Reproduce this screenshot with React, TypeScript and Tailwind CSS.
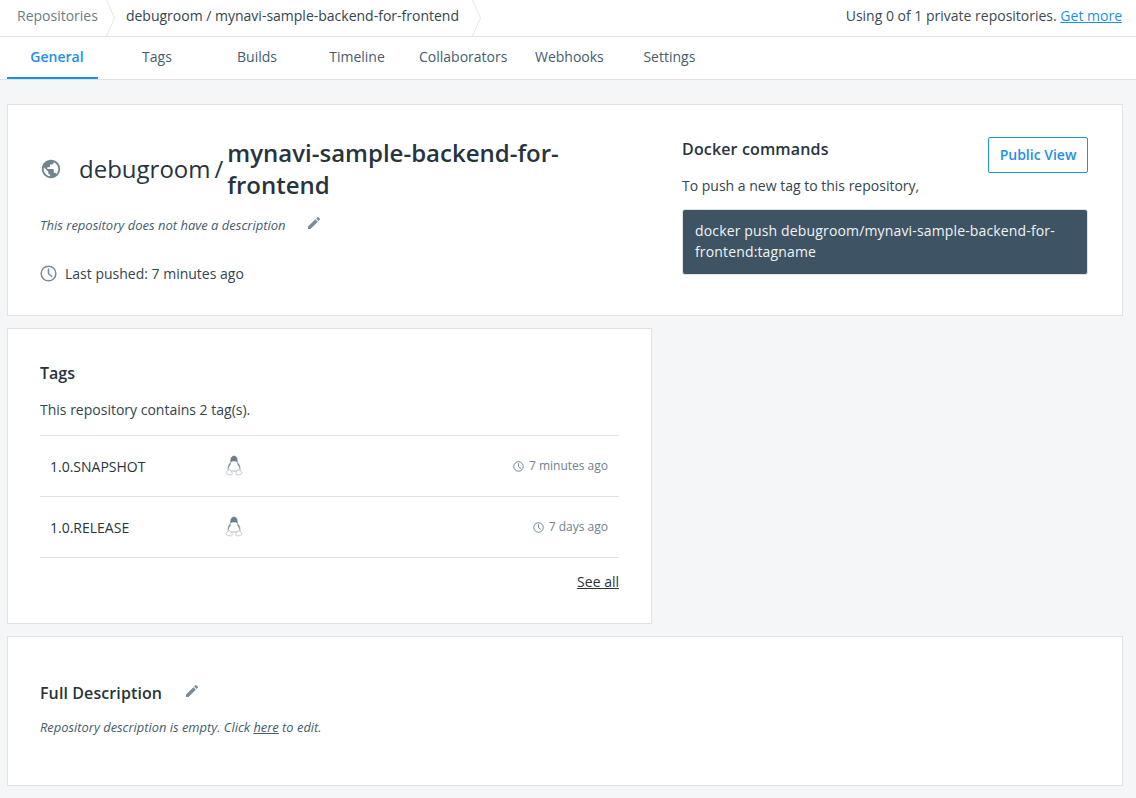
import React from 'react';

const tabs = ['General', 'Tags', 'Builds', 'Timeline', 'Collaborators', 'Webhooks', 'Settings'];

const Chevron = () => (
  <svg width="10" height="36" viewBox="0 0 10 36" fill="none" className="shrink-0 self-start">
    <path d="M0.5 0L8.5 18L0.5 36" stroke="#e4e7ea" strokeWidth="1" />
  </svg>
);

const Clock = ({ size, color }: { size: number; color: string }) => (
  <svg width={size} height={size} viewBox="0 0 16 16" fill="none" stroke={color} strokeWidth="1.4" className="shrink-0">
    <circle cx="8" cy="8" r="6.9" />
    <path d="M8 3.8V8.2L11 10.6" strokeLinecap="round" />
  </svg>
);

const Pencil = () => (
  <svg width="16" height="16" viewBox="0 0 24 24" fill="#7a8c9a" className="-mt-[4px] shrink-0">
    <path d="M3 17.25V21h3.75L17.81 9.94l-3.75-3.75L3 17.25zM20.71 7.04a1 1 0 0 0 0-1.41l-2.34-2.34a1 1 0 0 0-1.41 0l-1.83 1.83 3.75 3.75 1.83-1.83z" />
  </svg>
);

const Globe = () => (
  <svg width="22" height="22" viewBox="0 0 24 24" fill="#70858f" className="shrink-0">
    <path d="M12 2C6.48 2 2 6.48 2 12s4.48 10 10 10 10-4.48 10-10S17.52 2 12 2zm-1 17.93c-3.95-.49-7-3.85-7-7.93 0-.62.08-1.21.21-1.79L9 15v1c0 1.1.9 2 2 2v1.93zm6.9-2.54c-.26-.81-1-1.39-1.9-1.39h-1v-3c0-.55-.45-1-1-1H8v-2h2c.55 0 1-.45 1-1V7h2c1.1 0 2-.9 2-2v-.41c2.93 1.19 5 4.06 5 7.41 0 2.08-.8 3.97-2.1 5.39z" />
  </svg>
);

const Tux = () => (
  <svg width="20" height="22" viewBox="0 0 20 22" className="shrink-0">
    {/* body outline */}
    <path d="M10 1C7.700 1 6.800 2.800 6.800 5c0 2-.9 3.200-1.800 4.600C4 11.200 3.700 13.500 4.200 16h11.600C16.300 13.500 16 11.200 15 9.600 14.100 8.200 13.200 7 13.200 5 13.200 2.800 12.300 1 10 1z" fill="#fff" stroke="#a3b0b9" strokeWidth="0.9" />
    {/* head */}
    <path d="M10 1C7.700 1 6.800 2.800 6.800 5c0 1-.2 1.700-.5 2.500 1-.9 2.400-1.300 3.700-1.300s2.700.4 3.700 1.300c-.3-.8-.5-1.500-.5-2.500C13.200 2.800 12.300 1 10 1z" fill="#6b7e8b" />
    {/* shoulders */}
    <path d="M6.300 7.500C5.800 8.400 5.400 9 5 9.600 4.200 10.900 3.900 12.700 4 14.500c.6-1.800 1.400-3.600 2.600-5.100.3-.7.100-1.300-.3-1.900zM13.700 7.500c.5.900.9 1.500 1.300 2.100.8 1.300 1.100 3.100 1 4.900-.6-1.800-1.400-3.600-2.600-5.100-.3-.7-.1-1.300.3-1.900z" fill="#7f919d" />
    {/* feet */}
    <path d="M5 14.700C3.600 15.300 1.800 17 2.200 18.300c.5 1.200 3.800 1.800 5.200 1.500 1-.2 1.100-1.300.5-2.500-.5-1-1.700-2.700-2.900-2.600zM15 14.700c1.400.6 3.200 2.300 2.800 3.600-.5 1.200-3.800 1.800-5.200 1.500-1-.2-1.100-1.300-.5-2.500.5-1 1.700-2.700 2.900-2.600z" fill="#fff" stroke="#b3bec5" strokeWidth="0.8" />
  </svg>
);

const TagRow = ({ name, time }: { name: string; time: string }) => (
  <div className="flex h-[61px] items-center border-b border-[#dfe3e6] pl-[10px] pr-[11px]">
    <span className="w-[174px] text-[14px] text-[#27343d]">{name}</span>
    <Tux />
    <span className="ml-auto flex items-center gap-[5px] text-[12px] text-[#6e8290]">
      <Clock size={11} color="#6e8290" />
      {time}
    </span>
  </div>
);

export default function App() {
  return (
    <div className="h-[798px] overflow-hidden bg-[#f4f6f8] font-['Open_Sans',sans-serif] text-[#27343d]">
      <div className="flex h-[37px] items-center border-b border-[#dfe3e6] bg-white pb-[5px] pr-[14px] text-[14px]">
        <span className="pl-[17px] pr-[8px] text-[#6a7d8a]">Repositories</span>
        <Chevron />
        <span className="pl-[10px] pr-[13px] text-[#33454f]">debugroom / mynavi-sample-backend-for-frontend</span>
        <Chevron />
        <span className="ml-auto text-[#3b4a54]">
          Using 0 of 1 private repositories.{' '}
          <a className="text-[#1c90ed] underline">Get more</a>
        </span>
      </div>

      <div className="flex h-[43px] border-b border-[#dfe3e6] bg-white pl-[7px] text-[14px]">
        {tabs.map((t, i) => (
          <div
            key={t}
            className={`relative flex h-[42px] min-w-[100px] items-center justify-center px-3 pb-[4px] ${
              i === 0 ? 'font-semibold text-[#1c90ed]' : 'text-[#445d6e]'
            }`}
          >
            {t}
            {i === 0 && <span className="absolute bottom-0 left-0 h-[2px] w-[91px] bg-[#1c90ed]" />}
          </div>
        ))}
      </div>

      <div className="flex flex-col gap-[12px] pl-[7px] pr-[13px] pt-[24px]">
        <section className="flex h-[212px] border border-[#dfe3e6] bg-white">
          <div className="w-[674px] pl-[32px] pt-[33px]">
            <div className="flex h-[62px] items-center">
              <div className="mr-[17px]"><Globe /></div>
              <span className="text-[24px] font-normal text-[#27343d]">debugroom</span>
              <span className="ml-[4px] mr-[4px] text-[24px]">/</span>
              <h1 className="w-[340px] text-[24px] font-semibold leading-[32px]">mynavi-sample-backend-for-frontend</h1>
            </div>
            <div className="mt-[13px] flex items-center">
              <span className="w-[266px] text-[13px] italic leading-[24px] text-[#445d6e]">This repository does not have a description</span>
              <Pencil />
            </div>
            <div className="mt-[26px] flex items-center gap-[8px] text-[14px]">
              <Clock size={17} color="#7a8c9a" />
              <span className="text-[#33454f]">Last pushed: 7 minutes ago</span>
            </div>
          </div>
          <div className="w-[406px] pt-[32px]">
            <div className="flex items-start justify-between">
              <h2 className="text-[16px] font-semibold leading-[24px] tracking-[0.15px]">Docker commands</h2>
              <button className="flex h-[36px] w-[100px] items-center justify-center rounded-[2px] border border-[#1c90ed] pb-[2px] text-[14px] font-semibold text-[#1c90ed]">
                Public View
              </button>
            </div>
            <p className="mt-[1px] text-[14px] leading-[24px] text-[#33454f]">To push a new tag to this repository,</p>
            <div className="mt-[11px] h-[66px] rounded-[3px] border border-[#dfe3e6] bg-[#3e5363] px-[12px] py-[10px] text-[14px] leading-[21px] tracking-[0.15px] text-[#f1f3f5]">
              docker push debugroom/mynavi-sample-backend-for-frontend:tagname
            </div>
          </div>
        </section>

        <section className="h-[296px] w-[645px] border border-[#dfe3e6] bg-white px-[32px] pt-[32px]">
          <h2 className="text-[16px] font-semibold leading-[24px]">Tags</h2>
          <p className="mt-[15px] border-b border-[#dfe3e6] pb-[15px] text-[14px] leading-[20px] text-[#33454f]">This repository contains 2 tag(s).</p>
          <TagRow name="1.0.SNAPSHOT" time="7 minutes ago" />
          <TagRow name="1.0.RELEASE" time="7 days ago" />
          <div className="mt-[14px] text-right text-[14px] leading-[20px]">
            <a className="underline">See all</a>
          </div>
        </section>

        <section className="h-[150px] border border-[#dfe3e6] bg-white px-[32px] pt-[44px]">
          <div className="flex items-center">
            <h2 className="w-[144px] text-[16px] font-semibold leading-[24px] tracking-[0.1px]">Full Description</h2>
            <Pencil />
          </div>
          <p className="mt-[12px] text-[12.9px] italic leading-[20px] text-[#445d6e]">
            Repository description is empty. Click <a className="underline">here</a> to edit.
          </p>
        </section>
      </div>
    </div>
  );
}
